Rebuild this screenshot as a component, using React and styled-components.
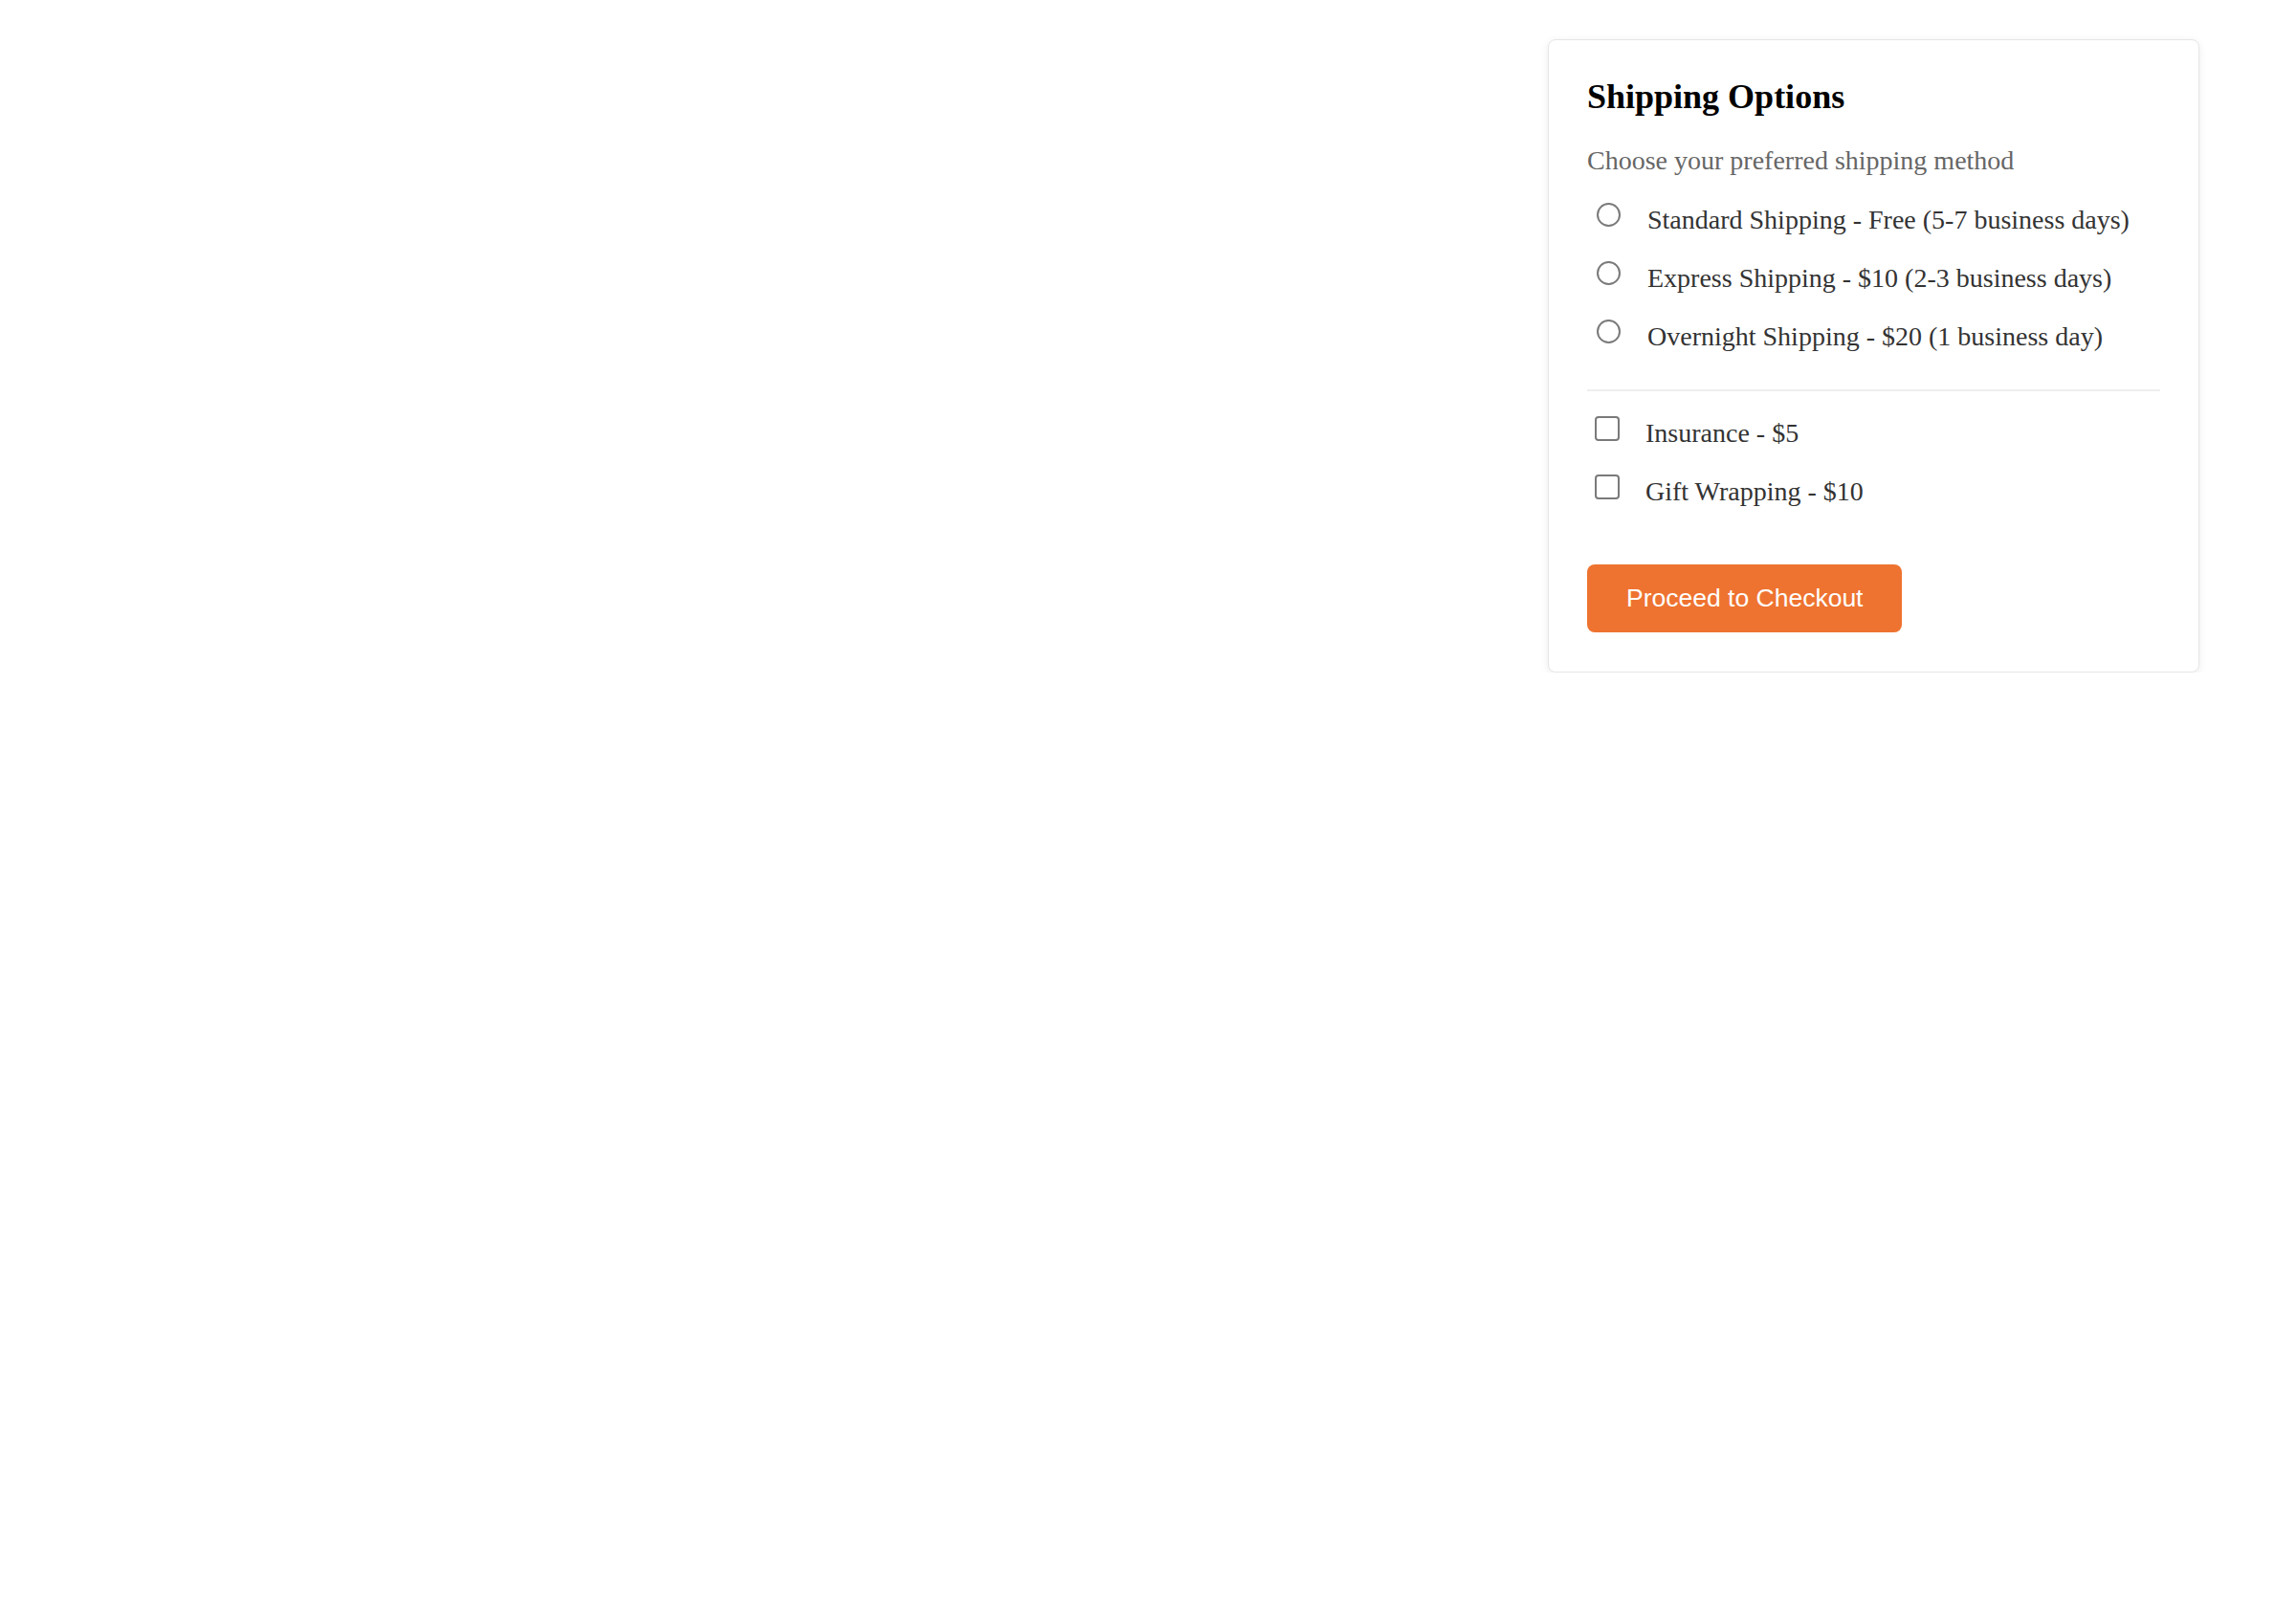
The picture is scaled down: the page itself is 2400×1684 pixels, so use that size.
import React, { useState } from "react";
import styled, { createGlobalStyle } from "styled-components";

const GlobalStyle = createGlobalStyle`
  body {
    margin: 0;
    background: #fff;
    font-family: "Liberation Serif", "Times New Roman", serif;
  }
`;

const shippingOptions = [
  { id: "standard", label: "Standard Shipping - Free (5-7 business days)" },
  { id: "express", label: "Express Shipping - $10 (2-3 business days)" },
  { id: "overnight", label: "Overnight Shipping - $20 (1 business day)" },
];

const extras = [
  { id: "insurance", label: "Insurance - $5" },
  { id: "gift", label: "Gift Wrapping - $10" },
];

function App() {
  const [method, setMethod] = useState("");
  const [checked, setChecked] = useState({});

  return (
    <Page>
      <GlobalStyle />
      <Card>
        <Title>Shipping Options</Title>
        <Subtitle>Choose your preferred shipping method</Subtitle>
        <Group $top="28px">
          {shippingOptions.map((opt) => (
            <Option key={opt.id}>
              <Radio
                type="radio"
                name="shipping"
                checked={method === opt.id}
                onChange={() => setMethod(opt.id)}
              />
              <LabelText>{opt.label}</LabelText>
            </Option>
          ))}
        </Group>
        <Divider />
        <Group $top="26px">
          {extras.map((ex) => (
            <Option key={ex.id} $extra>
              <Checkbox
                type="checkbox"
                checked={!!checked[ex.id]}
                onChange={() =>
                  setChecked({ ...checked, [ex.id]: !checked[ex.id] })
                }
              />
              <LabelText>{ex.label}</LabelText>
            </Option>
          ))}
        </Group>
        <CheckoutButton>Proceed to Checkout</CheckoutButton>
      </Card>
    </Page>
  );
}

export default App;

const Page = styled.div`
  display: flex;
  justify-content: flex-end;
  align-items: flex-start;
  padding: 41px 101px 0 0;
`;

const Card = styled.div`
  box-sizing: border-box;
  width: 681px;
  padding: 38px 40px 41px;
  background: #fff;
  border: 1px solid #e6e6e6;
  border-radius: 8px;
  box-shadow: 0 2px 8px rgba(0, 0, 0, 0.08);
  display: flex;
  flex-direction: column;
`;

const Title = styled.h2`
  margin: 0;
  font-size: 36px;
  font-weight: bold;
  color: #000;
`;

const Subtitle = styled.p`
  margin: 30px 0 0;
  font-size: 28px;
  color: #666;
`;

const Group = styled.div`
  display: flex;
  flex-direction: column;
  gap: 27px;
  margin-top: ${(p) => p.$top};
`;

const Option = styled.label`
  display: flex;
  align-items: flex-start;
  gap: ${(p) => (p.$extra ? "27px" : "28px")};
  padding-left: ${(p) => (p.$extra ? "8px" : "10px")};
  cursor: pointer;
`;

const Radio = styled.input`
  appearance: none;
  flex: none;
  box-sizing: border-box;
  width: 25px;
  height: 25px;
  margin: 0;
  border: 2px solid #7a7a7a;
  border-radius: 50%;
  background: #fff;
  cursor: pointer;

  &:checked {
    border-color: #ee7330;
    background: radial-gradient(circle, #ee7330 45%, #fff 50%);
  }
`;

const Checkbox = styled.input`
  appearance: none;
  flex: none;
  box-sizing: border-box;
  width: 26px;
  height: 26px;
  margin: 0;
  border: 2px solid #7a7a7a;
  border-radius: 4px;
  background: #fff;
  cursor: pointer;

  &:checked {
    border-color: #ee7330;
    background: #ee7330;
  }
`;

const LabelText = styled.span`
  font-size: 28px;
  line-height: 32px;
  padding-top: 2px;
  color: #333;
`;

const Divider = styled.hr`
  margin: 39px 0 0;
  border: none;
  border-top: 2px solid #eee;
`;

const CheckoutButton = styled.button`
  align-self: flex-start;
  margin-top: 60px;
  height: 71px;
  padding: 0 41px;
  border: none;
  border-radius: 8px;
  background: #ee7330;
  color: #fff;
  font-family: "Liberation Sans", Arial, sans-serif;
  font-size: 26.5px;
  cursor: pointer;
`;
